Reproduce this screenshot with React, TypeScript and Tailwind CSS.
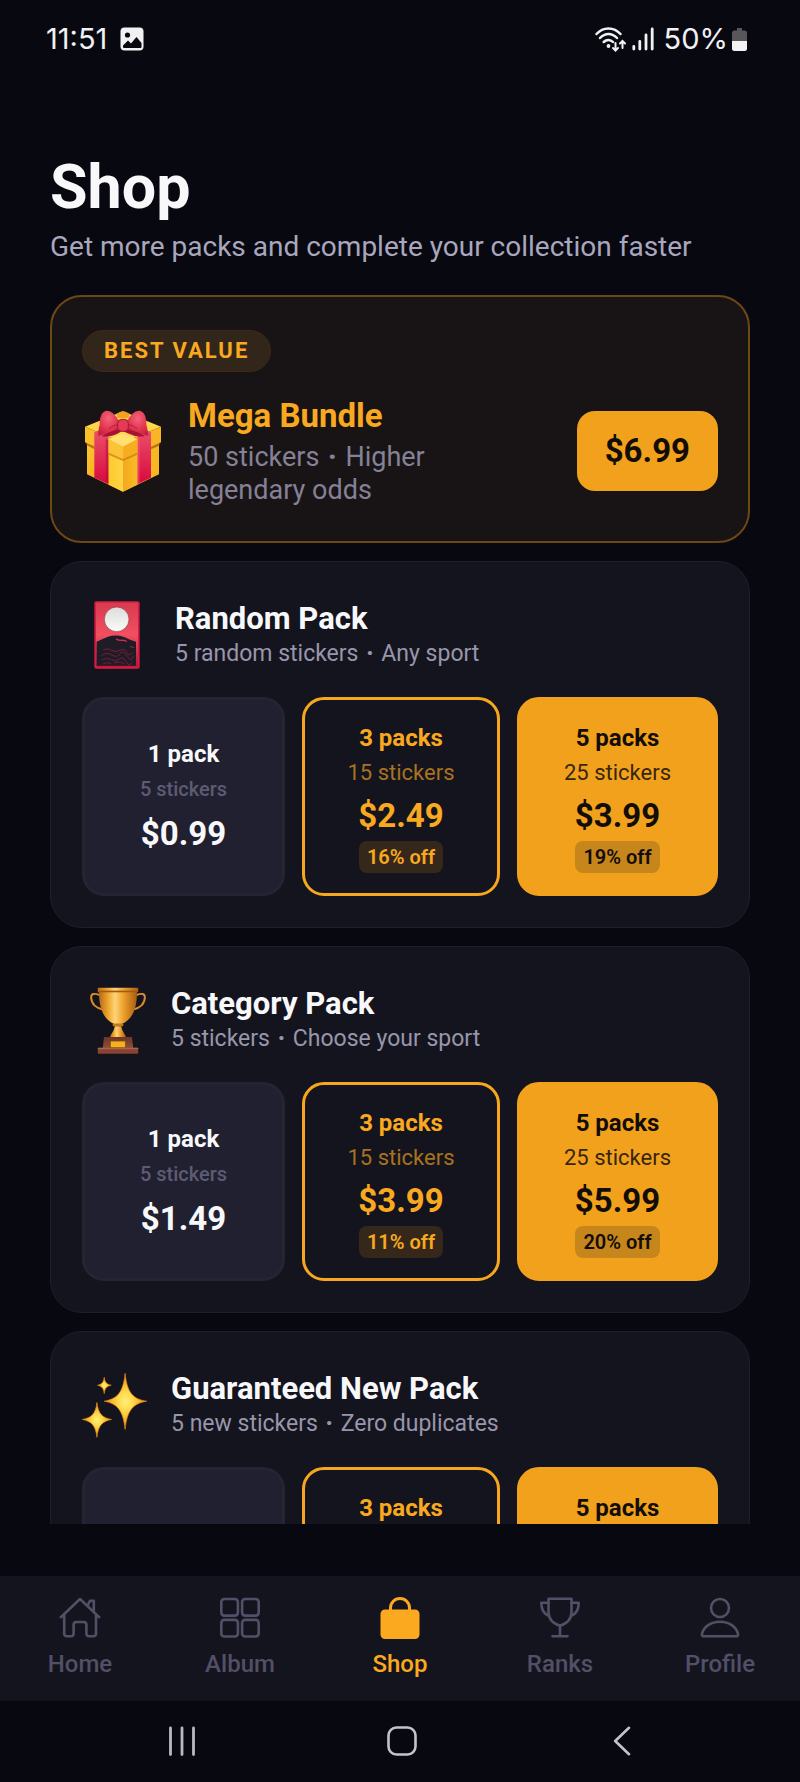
import React from "react";

type Tone = "plain" | "outline" | "solid";

interface Option {
  label: string;
  stickers?: string;
  price?: string;
  off?: string;
  tone: Tone;
}

interface Pack {
  id: string;
  title: string;
  blurb: [string, string];
  iconBox: string;
  icon: React.ReactNode;
  options: Option[];
}

function GiftIcon() {
  return (
    <svg viewBox="0 0 228 246" className="h-[82px] w-[76px]" aria-hidden="true">
      <defs>
        <linearGradient id="giftLeft" x1="0" y1="0" x2="1" y2="1">
          <stop offset="0" stopColor="#ffcb2e" />
          <stop offset="1" stopColor="#ee9512" />
        </linearGradient>
        <linearGradient id="giftFront" x1="0" y1="0" x2="1" y2="0">
          <stop offset="0" stopColor="#ffca2b" />
          <stop offset="0.49" stopColor="#ffd447" />
          <stop offset="0.5" stopColor="#f3a81b" />
          <stop offset="1" stopColor="#f9bb2a" />
        </linearGradient>
        <linearGradient id="giftRibbon" x1="0" y1="0" x2="0" y2="1">
          <stop offset="0" stopColor="#ea5068" />
          <stop offset="1" stopColor="#d8083f" />
        </linearGradient>
        <radialGradient id="giftBow" cx="0.5" cy="0.3" r="0.75">
          <stop offset="0" stopColor="#f4637b" />
          <stop offset="0.6" stopColor="#e2354f" />
          <stop offset="1" stopColor="#c31d40" />
        </radialGradient>
      </defs>
      <path d="M6 80 L114 120 V245 L6 193 Z" fill="url(#giftLeft)" />
      <path d="M222 80 L114 120 V245 L222 193 Z" fill="#f7b722" />
      <path d="M71 105 L114 125 L157 105 V224 L114 245 L71 224 Z" fill="url(#giftFront)" />
      <path d="M0 50 L114 4 L228 50 L114 98 Z" fill="#ffd54a" />
      <path d="M0 50 L114 98 V147 L0 97 Z" fill="#fbbf2c" />
      <path d="M228 50 L114 98 V147 L228 97 Z" fill="#f9b525" />
      <path d="M0 97 L28 109 V118 L6 106 Z M228 97 L198 110 V118 L222 107 Z" fill="#a65b0c" opacity="0.75" />
      <path d="M28 66 Q45 58 70 66 V222 L28 203 Z" fill="url(#giftRibbon)" />
      <path d="M198 66 Q182 58 158 66 V222 L198 203 Z" fill="url(#giftRibbon)" />
      <path d="M62 86 L70 90 V222 L62 218 Z" fill="#b50535" opacity="0.5" />
      <path d="M158 84 L164 81 V219 L158 222 Z" fill="#ff4e6d" opacity="0.6" />
      <path d="M71 88 L114 70 L157 88 L114 110 Z" fill="#ffe070" />
      <path d="M71 88 L114 110 V147 L71 128 Z" fill="#fcc338" />
      <path d="M157 88 L114 110 V147 L157 128 Z" fill="#f6ad1f" />
      <path d="M71 128 L114 147 L157 128 V134 L114 153 L71 134 Z" fill="#c47a10" opacity="0.7" />
      <path d="M94 12 Q114 -4 134 12 L130 24 H98 Z" fill="#f2a21d" />
      <path d="M100 52 Q70 66 50 78 Q72 84 100 70 L112 62 L128 70 Q156 84 180 78 Q160 66 130 52 Z" fill="#a91235" />
      <path d="M102 34 Q86 2 66 2 Q44 4 44 44 Q38 66 40 78 Q68 68 102 56 Z" fill="url(#giftBow)" />
      <path d="M126 34 Q142 2 162 2 Q184 4 184 44 Q190 66 190 78 Q164 68 126 56 Z" fill="url(#giftBow)" />
      <path d="M98 44 Q84 44 72 56 M130 44 Q144 44 156 56" stroke="#b0203e" strokeWidth="3" fill="none" />
      <rect x="98" y="28" width="32" height="36" rx="12" fill="#e43a56" stroke="#a91636" strokeWidth="3" />
    </svg>
  );
}

function CardIcon() {
  return (
    <svg viewBox="0 0 138 204" className="h-[68px] w-[46px]" aria-hidden="true">
      <defs>
        <linearGradient id="cardSky" x1="0" y1="0" x2="0" y2="1">
          <stop offset="0" stopColor="#d93a50" />
          <stop offset="0.5" stopColor="#f0505f" />
          <stop offset="1" stopColor="#c01238" />
        </linearGradient>
        <linearGradient id="cardMoon" x1="0" y1="0" x2="0" y2="1">
          <stop offset="0" stopColor="#dcdcda" />
          <stop offset="1" stopColor="#fbfbf8" />
        </linearGradient>
      </defs>
      <rect x="1" y="1" width="136" height="202" rx="6" fill="#d71c43" />
      <rect x="6" y="5" width="126" height="192" rx="3" fill="url(#cardSky)" />
      <circle cx="68" cy="55" r="37" fill="url(#cardMoon)" stroke="#8f3440" strokeWidth="2" />
      <path d="M8 122 Q30 112 42 107 Q66 100 90 108 Q110 118 126 122 V194 H8 Z" fill="#1e1c26" />
      <g stroke="#8d1c39" strokeWidth="2.5" fill="none">
        <path d="M66 113 q8 6 18 5 t14 4" stroke="#e0284b" strokeWidth="4" />
        <path d="M108 136 l12 4" stroke="#c22545" />
        <path d="M28 146 q14 -6 26 2 t24 0 t20 6 t18 0" />
        <path d="M22 164 q16 -12 32 -2 t24 -4 t22 8 t18 -2" />
        <path d="M24 176 q14 -8 28 0 t24 -2 t20 8 t18 2" />
        <path d="M28 188 q14 -6 24 0 M60 186 q16 -8 32 2" />
      </g>
    </svg>
  );
}

function TrophyIcon() {
  return (
    <svg viewBox="0 0 168 202" className="h-[67px] w-[56px]" aria-hidden="true">
      <defs>
        <linearGradient id="cupGold" x1="0" y1="0" x2="1" y2="0">
          <stop offset="0" stopColor="#b96a14" />
          <stop offset="0.25" stopColor="#f0a832" />
          <stop offset="0.42" stopColor="#ffd578" />
          <stop offset="0.65" stopColor="#eda02c" />
          <stop offset="1" stopColor="#a85b10" />
        </linearGradient>
        <linearGradient id="cupBase" x1="0" y1="0" x2="0" y2="1">
          <stop offset="0" stopColor="#6b3526" />
          <stop offset="1" stopColor="#8f4f3b" />
        </linearGradient>
      </defs>
      <path
        d="M28 24 C12 18 3 20 3 32 C4 52 20 64 38 68 M140 24 C156 18 165 20 165 32 C164 52 148 64 130 68"
        fill="none"
        stroke="#d98d26"
        strokeWidth="6"
      />
      <path d="M27 14 H141 C142 60 130 98 94 112 H74 C38 98 26 60 27 14 Z" fill="url(#cupGold)" />
      <rect x="23" y="2" width="122" height="14" rx="3" fill="url(#cupGold)" />
      <rect x="27" y="11" width="114" height="5" fill="#a35a12" />
      <rect x="68" y="110" width="32" height="8" rx="3" fill="#c27a1d" />
      <path d="M74 118 H94 C96 134 106 142 108 151 H60 C62 142 72 134 74 118 Z" fill="url(#cupGold)" />
      <path d="M42 151 H126 L130 184 H38 Z" fill="url(#cupBase)" />
      <rect x="23" y="183" width="122" height="18" rx="3" fill="#87432f" />
      <rect x="23" y="183" width="122" height="5" rx="2" fill="#a9664f" />
      <rect x="61" y="163" width="45" height="20" fill="#f6b21d" stroke="#8a4a12" strokeWidth="2" />
    </svg>
  );
}

function SparklesIcon() {
  return (
    <svg viewBox="0 0 196 196" className="size-[65px]" aria-hidden="true">
      <defs>
        <radialGradient id="sparkGold" cx="0.5" cy="0.5" r="0.5">
          <stop offset="0" stopColor="#ffef7c" />
          <stop offset="0.35" stopColor="#ffd94a" />
          <stop offset="1" stopColor="#f08c12" />
        </radialGradient>
      </defs>
      <g fill="url(#sparkGold)" stroke="#e8890f" strokeWidth="2" strokeLinejoin="round">
        <path d="M130 1 C136 60 154 79 195 85 C154 92 136 112 130 170 C124 112 106 92 67 85 C106 78 124 60 130 1 Z" />
        <path d="M45 89 C49 124 62 135 89 140 C62 146 49 157 45 194 C41 157 28 146 1 140 C28 135 41 124 45 89 Z" />
        <path d="M67 13 C69 28 74 34 88 37 C74 40 69 46 67 62 C65 46 60 40 47 37 C60 34 65 28 67 13 Z" />
      </g>
    </svg>
  );
}

const packs: Pack[] = [
  {
    id: "random",
    title: "Random Pack",
    blurb: ["5 random stickers", "Any sport"],
    iconBox: "w-[93px] pl-3",
    icon: <CardIcon />,
    options: [
      { label: "1 pack", stickers: "5 stickers", price: "$0.99", tone: "plain" },
      { label: "3 packs", stickers: "15 stickers", price: "$2.49", off: "16% off", tone: "outline" },
      { label: "5 packs", stickers: "25 stickers", price: "$3.99", off: "19% off", tone: "solid" },
    ],
  },
  {
    id: "category",
    title: "Category Pack",
    blurb: ["5 stickers", "Choose your sport"],
    iconBox: "w-[89px] pl-2",
    icon: <TrophyIcon />,
    options: [
      { label: "1 pack", stickers: "5 stickers", price: "$1.49", tone: "plain" },
      { label: "3 packs", stickers: "15 stickers", price: "$3.99", off: "11% off", tone: "outline" },
      { label: "5 packs", stickers: "25 stickers", price: "$5.99", off: "20% off", tone: "solid" },
    ],
  },
  {
    id: "guaranteed",
    title: "Guaranteed New Pack",
    blurb: ["5 new stickers", "Zero duplicates"],
    iconBox: "w-[89px]",
    icon: <SparklesIcon />,
    options: [
      { label: "", tone: "plain" },
      { label: "3 packs", tone: "outline" },
      { label: "5 packs", tone: "solid" },
    ],
  },
];

const tileTone: Record<Tone, string> = {
  plain: "border-[#242433] bg-[#212030] pt-[37px] text-[#f8f8fb]",
  outline: "border-[#f7a71e] bg-[#14141e] pt-[21px] text-[#f9a91f]",
  solid: "border-[#f2a11c] bg-[#f2a11c] pt-[21px] text-[#120d08]",
};

const stickerTone: Record<Tone, string> = {
  plain: "text-[20px] font-medium text-[#5d5b73]",
  outline: "text-[22px] text-[#a87220]",
  solid: "text-[22px] text-[#38260c]",
};

const priceTone: Record<Tone, string> = {
  plain: "mt-0.5",
  outline: "",
  solid: "",
};

const offTone: Record<Tone, string> = {
  plain: "",
  outline: "bg-[#35281b]",
  solid: "bg-[#c6861c]",
};

function Dot() {
  return <span className="mx-0.5 font-black">·</span>;
}

function OptionTile({ option }: { option: Option }) {
  return (
    <button
      type="button"
      aria-label={option.label ? undefined : "Single pack"}
      className={`flex min-h-[199px] flex-col items-center rounded-[22px] border-[3px] pb-5 ${tileTone[option.tone]}`}
    >
      {option.label && <span className="text-[24px] leading-[34px] font-bold">{option.label}</span>}
      {option.stickers && <span className={`leading-[36px] ${stickerTone[option.tone]}`}>{option.stickers}</span>}
      {option.price && (
        <span className={`text-[33px] leading-[50px] font-bold ${priceTone[option.tone]}`}>{option.price}</span>
      )}
      {option.off && (
        <span className={`rounded-lg px-2 text-[20px] leading-[32px] font-semibold ${offTone[option.tone]}`}>
          {option.off}
        </span>
      )}
    </button>
  );
}

function PackCard({ pack }: { pack: Pack }) {
  return (
    <section
      className="rounded-[32px] border border-[#1f1f2a] bg-[#14141e] px-[31px] pt-8 pb-[31px]"
      aria-labelledby={pack.id}
    >
      <div className="flex h-[82px] items-center">
        <div className={`shrink-0 ${pack.iconBox}`}>{pack.icon}</div>
        <div>
          <h2 id={pack.id} className="text-[31px] leading-[38px] font-bold text-[#f8f8fb]">
            {pack.title}
          </h2>
          <p className="text-[23px] leading-[32px] text-[#9896ab]">
            {pack.blurb[0]} <Dot /> {pack.blurb[1]}
          </p>
        </div>
      </div>
      <div className="mt-[21px] grid grid-cols-[203fr_198fr_201fr] gap-[17px]">
        {pack.options.map((option) => (
          <OptionTile key={option.tone} option={option} />
        ))}
      </div>
    </section>
  );
}

function StatusBar() {
  return (
    <header className="flex h-[78px] shrink-0 items-center justify-between pr-[53px] pl-[46px] font-[Inter,sans-serif] text-[29px] text-[#f1f1f3]">
      <div className="flex items-center gap-[13px]">
        <span>11:51</span>
        <svg viewBox="0 0 24 24" className="size-6" aria-hidden="true">
          <rect x="0.5" y="0.5" width="23" height="23" rx="4" fill="#f1f1f3" />
          <circle cx="7.5" cy="8" r="2.6" fill="#080810" />
          <path d="M3 20 V18.5 L8 13.5 L11 16.5 L16.5 10 L21.5 16 V20 Q21.5 21 20.5 21 H4 Q3 21 3 20 Z" fill="#080810" />
        </svg>
      </div>
      <div className="flex items-center">
        <svg viewBox="0 0 31 26" className="h-[26px] w-[31px]" fill="none" stroke="#f1f1f3" strokeWidth="2.5" strokeLinecap="round" aria-hidden="true">
          <path d="M1.5 8 C8 0.5 19 0.5 25.5 8" />
          <path d="M5 12 C10 6.5 17 6.5 22 12" />
          <path d="M8.7 16 C11.5 13.2 15.5 13.2 18 16" />
          <circle cx="13.5" cy="20" r="1.9" fill="#f1f1f3" stroke="none" />
          <path d="M20.5 17 V24 M18 22 L20.5 24.5 L23 22" strokeWidth="2" />
          <path d="M27.5 22 V15.5 M25 17.5 L27.5 15 L30 17.5" strokeWidth="2" />
        </svg>
        <svg viewBox="0 0 22 24" className="ml-[6px] h-6 w-[22px]" stroke="#f1f1f3" strokeWidth="2.8" strokeLinecap="round" aria-hidden="true">
          <path d="M1.8 19.5 V22 M7.8 14.5 V22" />
          <path d="M14 8 V22 M20.2 2 V22" />
        </svg>
        <span className="ml-[10px]">50%</span>
        <svg viewBox="0 0 15 24" className="ml-1 h-6 w-[15px]" aria-hidden="true">
          <path d="M5 1 H10 V3.5 H12.5 Q15 3.5 15 6 V14 H0 V6 Q0 3.5 2.5 3.5 H5 Z" fill="#57575b" />
          <path d="M0 14 H15 V21.5 Q15 24 12.5 24 H2.5 Q0 24 0 21.5 Z" fill="#f3f3f5" />
        </svg>
      </div>
    </header>
  );
}

const line = {
  fill: "none",
  stroke: "currentColor",
  strokeWidth: 2.6,
  strokeLinecap: "round" as const,
  strokeLinejoin: "round" as const,
};

const tabs = [
  {
    label: "Home",
    icon: (
      <g {...line}>
        <path d="M1.8 20.2 L21 2 L40.2 20.2" />
        <path d="M5.2 17.5 V36.5 Q5.2 39.3 8 39.3 H12 Q14.6 39.3 14.6 36.5 V28 Q14.6 25 17.6 25 H24.4 Q27.4 25 27.4 28 V36.5 Q27.4 39.3 30 39.3 H34.2 Q37 39.3 37 36.5 V17.5" />
        <path d="M28.6 8.5 L31 3.8 H34.8 V14.5" />
      </g>
    ),
  },
  {
    label: "Album",
    icon: (
      <g {...line}>
        <rect x="2.3" y="2" width="16.6" height="16.6" rx="3" />
        <rect x="23.1" y="2" width="16.6" height="16.6" rx="3" />
        <rect x="2.3" y="22.9" width="16.6" height="16.6" rx="3" />
        <rect x="23.1" y="22.9" width="16.6" height="16.6" rx="3" />
      </g>
    ),
  },
  {
    label: "Shop",
    active: true,
    icon: (
      <g>
        <path d="M11.5 16 V11 A9.5 9.5 0 0 1 30.5 11 V16" fill="none" stroke="currentColor" strokeWidth="3" />
        <rect x="1.5" y="12.5" width="39" height="29.5" rx="4.5" fill="currentColor" />
      </g>
    ),
  },
  {
    label: "Ranks",
    icon: (
      <g {...line}>
        <path d="M9.5 1.8 H32.5 V15 C32.5 22.5 28 26.5 21 28.8 C14 26.5 9.5 22.5 9.5 15 Z" />
        <path d="M9.5 5.8 H2.3 C2.3 12.5 4.5 17 10 19 M32.5 5.8 H39.7 C39.7 12.5 37.5 17 32 19" />
        <path d="M21 28.8 V38.5 M13.5 39.3 H28.5" />
      </g>
    ),
  },
  {
    label: "Profile",
    icon: (
      <g {...line}>
        <circle cx="21" cy="11" r="9" />
        <path d="M4.5 39.3 H37.5 Q39.3 39.3 39 37 C37.5 29.5 30 24.8 21 24.8 C12 24.8 4.5 29.5 3 37 Q2.7 39.3 4.5 39.3 Z" />
      </g>
    ),
  },
];

function TabBar() {
  return (
    <nav className="grid h-[125px] shrink-0 grid-cols-5 bg-[#14141e] pt-[21px]">
      {tabs.map((tab) => (
        <a
          key={tab.label}
          href={`#${tab.label.toLowerCase()}`}
          aria-current={tab.active ? "page" : undefined}
          className={`flex flex-col items-center gap-[7px] text-[24px] leading-[32px] font-medium ${
            tab.active ? "text-[#fba91f]" : "text-[#524f67]"
          }`}
        >
          <svg viewBox="0 0 42 44" className="h-[44px] w-[42px]" aria-hidden="true">
            {tab.icon}
          </svg>
          {tab.label}
        </a>
      ))}
    </nav>
  );
}

function SystemBar() {
  return (
    <footer className="flex h-[81px] shrink-0 items-center justify-center gap-[176px] pb-0.5 pl-1">
      <button type="button" aria-label="Recent apps" className="flex w-11 justify-center">
        <svg viewBox="0 0 30 30" className="size-[30px]" stroke="#b9b9bd" strokeWidth="2.8" strokeLinecap="round" aria-hidden="true">
          <path d="M3.5 2 V28.5 M15 2 V28.5 M26.5 2 V28.5" />
        </svg>
      </button>
      <button type="button" aria-label="Home screen" className="flex w-11 justify-center">
        <svg viewBox="0 0 30 30" className="size-[30px]" fill="none" stroke="#c4c4c8" strokeWidth="2.6" aria-hidden="true">
          <rect x="1.5" y="1.5" width="27" height="27" rx="8" />
        </svg>
      </button>
      <button type="button" aria-label="Back" className="flex w-11 justify-center">
        <svg viewBox="0 0 18 30" className="h-[30px] w-[18px]" fill="none" stroke="#c4c4c8" strokeWidth="2.6" strokeLinecap="round" strokeLinejoin="round" aria-hidden="true">
          <path d="M16 1.8 L2.2 15 L16 28.2" />
        </svg>
      </button>
    </footer>
  );
}

export default function App() {
  return (
    <div className="flex h-screen flex-col bg-[#080810] font-[Roboto,sans-serif]">
      <StatusBar />
      <main className="mb-[52px] min-h-0 flex-1 overflow-y-auto px-[50px] pt-[73px] [scrollbar-width:none]">
        <h1 className="text-[61px] leading-[72px] font-bold text-[#f8f8fb]">Shop</h1>
        <p className="mt-1.5 text-[28px] leading-[36px] text-[#a9a7bd]">
          Get more packs and complete your collection faster
        </p>

        <div className="mt-[30px] flex flex-col gap-[18px] pb-8">
          <section className="rounded-[32px] border-2 border-[#6e4814] bg-[#181415] px-[30px] pt-[33px] pb-[34px]" aria-labelledby="mega">
            <span className="inline-block rounded-full border border-[#3c2a16] bg-[#32251a] px-[21px] text-[22px] leading-[40px] font-bold tracking-[2px] text-[#f9a91f]">
              BEST VALUE
            </span>
            <div className="mt-[23px] flex items-center">
              <div className="w-[106px] shrink-0 pl-[3px]">
                <GiftIcon />
              </div>
              <div className="max-w-[280px]">
                <h2 id="mega" className="text-[33px] leading-[42px] font-bold text-[#f9a91f]">
                  Mega Bundle
                </h2>
                <p className="mt-1 text-[27px] leading-[33px] text-[#858196]">
                  50 stickers <Dot /> Higher legendary odds
                </p>
              </div>
              <button
                type="button"
                className="ml-auto rounded-[18px] bg-[#f2a11c] px-7 text-[33px] leading-[80px] font-bold text-[#120d08]"
              >
                $6.99
              </button>
            </div>
          </section>

          {packs.map((pack) => (
            <PackCard key={pack.id} pack={pack} />
          ))}
        </div>
      </main>
      <TabBar />
      <SystemBar />
    </div>
  );
}
